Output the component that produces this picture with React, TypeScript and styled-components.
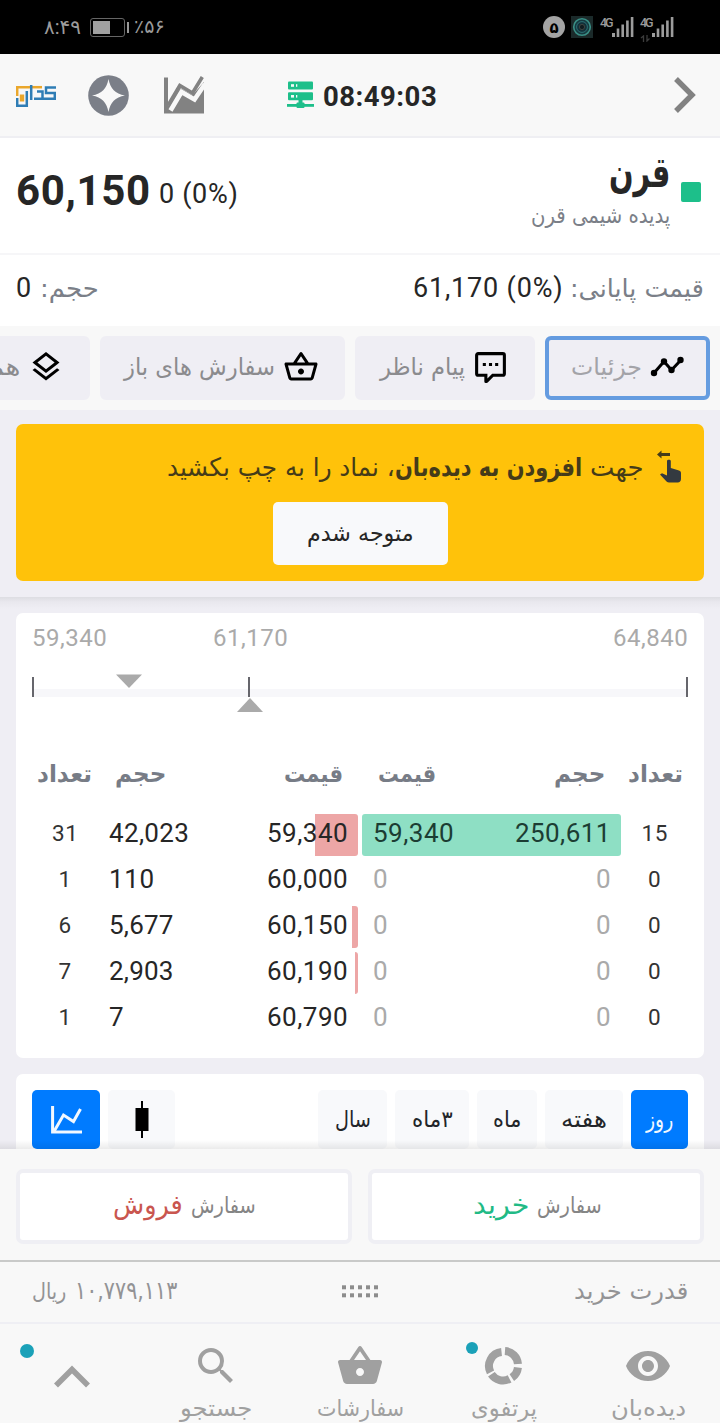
import React, { useLayoutEffect, useRef, useState } from "react";
import styled, { createGlobalStyle } from "styled-components";
import {
  MdOutlineShoppingBasket,
  MdOutlineLayers,
  MdSearch,
  MdShoppingBasket,
  MdVisibility,
} from "react-icons/md";

const GlobalStyle = createGlobalStyle`
  * { box-sizing: border-box; }
  html, body { margin: 0; padding: 0; }
  body {
    width: 720px;
    height: 1423px;
    overflow: hidden;
    background: #efeef4;
    font-family: Roboto, "DejaVu Sans", sans-serif;
    color: #262626;
  }
  svg { display: block; flex: none; }
`;

/* ---------- text that is fitted to a fixed width ---------- */

const FitBox = styled.span<{ $w: number; $color?: string }>`
  display: block;
  flex: none;
  width: ${(p) => p.$w}px;
  direction: ltr;
  white-space: nowrap;
  color: ${(p) => p.$color ?? "inherit"};
`;

const FitInner = styled.span<{ $size: number; $weight: number; $rtl: boolean; $family: string }>`
  display: inline-block;
  direction: ${(p) => (p.$rtl ? "rtl" : "ltr")};
  font-family: ${(p) => p.$family};
  font-size: ${(p) => p.$size}px;
  font-weight: ${(p) => p.$weight};
  line-height: 1.2;
  transform-origin: 0 50%;
`;

interface FitProps {
  w: number;
  size: number;
  weight?: number;
  color?: string;
  dy?: number;
  children: string;
}

/* Joined scripts are scaled; digits are spaced out instead. */
const Fit = ({
  w, size, weight = 400, color, dy = 0, children, rtl, family,
}: FitProps & { rtl: boolean; family: string }) => {
  const ref = useRef<HTMLSpanElement>(null);
  const [natural, setNatural] = useState(w);
  useLayoutEffect(() => {
    if (ref.current) setNatural(ref.current.offsetWidth);
  }, []);
  const scale = rtl ? w / natural : 1;
  const spacing = rtl ? 0 : (w - natural) / children.length;
  return (
    <FitBox $w={w} $color={color}>
      <FitInner
        ref={ref}
        $size={size}
        $weight={weight}
        $rtl={rtl}
        $family={family}
        style={{ transform: `translateY(${dy}px) scaleX(${scale})`, letterSpacing: `${spacing}px` }}
      >
        {children}
      </FitInner>
    </FitBox>
  );
};

const Fa = (p: FitProps) => <Fit {...p} rtl family={`"DejaVu Sans", sans-serif`} />;
const Num = (p: FitProps) => <Fit {...p} rtl={false} family={`Roboto, "DejaVu Sans", sans-serif`} />;

/* ---------- layout ---------- */

const Screen = styled.div`
  width: 720px;
  height: 1423px;
  overflow: hidden;
  display: flex;
  flex-direction: column;
`;

const StatusBar = styled.div`
  height: 54px;
  flex: none;
  background: #000;
  color: #9b9b9b;
  display: flex;
  align-items: center;
  padding: 0 47px 0 44px;
`;

const Battery = styled.div`
  width: 35px;
  height: 19px;
  margin-left: 12px;
  border: 1.5px solid #666;
  border-radius: 3px;
  padding: 2px;
  &::before { content: ""; display: block; width: 17px; height: 100%; background: #a0a0a0; }
`;
const BatteryTip = styled.div`
  width: 2px; height: 11px; margin: 0 5px 0 2px; background: #999;
`;
const Grow = styled.div`flex: 1;`;

const CountBadge = styled.div`
  width: 22px; height: 22px; border-radius: 50%;
  background: #a3a3a3; color: #000;
  display: flex; align-items: center; justify-content: center;
  margin-right: 6px;
`;

const Signal = styled.div`
  display: flex; align-items: flex-start; width: 33px; height: 22px; margin-left: 7px;
`;
const SignalLabel = styled.div`
  width: 12px; flex: none;
`;

const Header = styled.header`
  height: 84px;
  flex: none;
  background: #f8f8f8;
  border-bottom: 2px solid #efeff3;
  display: flex;
  align-items: center;
  padding: 0 23px 0 16px;
`;

const HeadIcon = styled.div<{ $ml: number }>`margin-left: ${(p) => p.$ml}px;`;

const SymbolRow = styled.section`
  height: 117px;
  flex: none;
  background: #fff;
  border-bottom: 2px solid #f6f6f8;
  display: flex;
  align-items: center;
  padding: 0 19px 8px 16px;
`;
const SymbolName = styled.div`
  display: flex; flex-direction: column; align-items: flex-end;
  margin-right: 11px;
`;
const StatusSquare = styled.div`
  width: 20px; height: 20px; border-radius: 2px; background: #1dbf8a;
`;

const FinalRow = styled.section`
  height: 71px;
  flex: none;
  background: #fff;
  display: flex;
  align-items: center;
  padding: 0 16px 5px;
`;
const Gap = styled.div<{ $w: number }>`width: ${(p) => p.$w}px; flex: none;`;

const Tabs = styled.nav`
  height: 84px;
  flex: none;
  background: #f8f8f8;
  display: flex;
  direction: rtl;
  align-items: center;
  gap: 10px;
  padding: 0 10px;
`;
const Tab = styled.button<{ $w: number; $pad: number; $active?: boolean }>`
  all: unset;
  box-sizing: border-box;
  direction: rtl;
  flex: none;
  width: ${(p) => p.$w}px;
  height: 64px;
  border-radius: 6px;
  border: 4px solid ${(p) => (p.$active ? "#659ce0" : "#efeef4")};
  background: #efeef4;
  display: flex;
  align-items: center;
  padding: 0 ${(p) => p.$pad}px 4px 0;
  color: ${(p) => (p.$active ? "#a3a3a8" : "#8b8b8e")};
  svg { color: #000; margin-top: 2px; }
`;

const AlertArea = styled.section`
  height: 187px;
  flex: none;
  padding: 14px 16px 16px;
`;
const Alert = styled.div`
  height: 157px;
  border-radius: 7px;
  background: #ffc20a;
  display: flex;
  flex-direction: column;
  align-items: center;
`;
const AlertLine = styled.div`
  align-self: stretch;
  direction: rtl;
  display: flex;
  align-items: center;
  height: 78px;
  padding: 6px 23px 0 0;
  color: #453b19;
`;
const AlertButton = styled.button`
  all: unset;
  width: 175px;
  height: 63px;
  margin-left: 1px;
  border-radius: 5px;
  background: #f8f9fb;
  display: flex;
  align-items: center;
  justify-content: center;
`;

const Content = styled.main`
  height: 552px;
  flex: none;
  padding: 16px 16px 0;
  background: linear-gradient(#dddde2, #e9e8ee 5px, #efeef4 12px);
  position: relative;
  overflow: hidden;
  display: flex;
  flex-direction: column;
  gap: 16px;
  &::after {
    content: "";
    position: absolute;
    left: 0; right: 0; bottom: 0;
    height: 9px;
    background: linear-gradient(rgba(0,0,0,0), rgba(0,0,0,0.08));
  }
`;

const Book = styled.div`
  height: 445px;
  flex: none;
  border-radius: 7px;
  background: #fff;
  padding: 10px 16px 0;
`;
const ScaleLabels = styled.div`
  display: flex; height: 30px; align-items: center; color: #aaa;
  margin-bottom: 20px;
`;

const BookHead = styled.div`
  display: flex;
  height: 50px;
  align-items: center;
  margin: 37px 0 13px;
  padding-left: 5px;
  color: #777c86;
`;
const BookRow = styled.div`
  display: grid;
  grid-template-columns: 66px 260px 4px 259px 67px;
  height: 46px;
  align-items: center;
`;
const Count = styled.div`
  display: flex; justify-content: center; color: #333;
`;
const Side = styled.div<{ $bar: number; $color: string; $from: string }>`
  height: 42px;
  display: flex;
  align-items: center;
  justify-content: space-between;
  padding: 0 10px 3px 11px;
  background: linear-gradient(${(p) => p.$color}, ${(p) => p.$color}) ${(p) => p.$from} / ${(p) => p.$bar}px 100% no-repeat;
  border-radius: 3px;
`;

const ChartCard = styled.div`
  height: 90px;
  flex: none;
  border-radius: 7px 7px 0 0;
  background: #fff;
  padding: 16px;
  display: flex;
  gap: 8px;
`;
const ChartButton = styled.button<{ $w: number; $on?: boolean }>`
  all: unset;
  width: ${(p) => p.$w}px;
  height: 59px;
  flex: none;
  border-radius: 5px;
  background: ${(p) => (p.$on ? "#007bff" : "#f8f9fb")};
  color: ${(p) => (p.$on ? "#f2f8ff" : "#222529")};
  display: flex;
  align-items: center;
  justify-content: center;
`;

const Orders = styled.section`
  height: 113px;
  flex: none;
  background: #f8f8f8;
  border-bottom: 2px solid #c9cac9;
  display: flex;
  gap: 16px;
  padding: 20px 16px 16px;
`;
const OrderButton = styled.button<{ $left: number }>`
  all: unset;
  box-sizing: border-box;
  flex: none;
  width: 336px;
  height: 75px;
  border: 4px solid #efeff4;
  border-radius: 7px;
  background: #fff;
  display: flex;
  align-items: center;
  gap: 8px;
  padding: 0 0 2px ${(p) => p.$left}px;
  color: #858585;
`;

const Power = styled.section`
  height: 62px;
  flex: none;
  background: #f8f8f8;
  border-bottom: 2px solid #efeff4;
  display: flex;
  align-items: center;
  padding: 0 32px 2px;
  color: #939395;
`;

const Nav = styled.nav`
  height: 99px;
  flex: none;
  background: #f8f8f8;
  display: grid;
  grid-template-columns: repeat(5, 144px);
  color: #a0a0a0;
`;
const NavItem = styled.a`
  position: relative;
  display: flex;
  flex-direction: column;
  align-items: center;
  padding-top: 17px;
  overflow: hidden;
`;
const NavIcon = styled.div<{ $drop?: number }>`
  height: 50px; display: flex; align-items: center; justify-content: center;
  margin-bottom: 4px;
  padding-top: ${(p) => p.$drop ?? 0}px;
`;
const Dot = styled.i<{ $x: number; $y: number; $d: number }>`
  position: absolute;
  left: ${(p) => p.$x}px;
  top: ${(p) => p.$y}px;
  width: ${(p) => p.$d}px;
  height: ${(p) => p.$d}px;
  border-radius: 50%;
  background: #1ba1b8;
`;

/* ---------- drawings ---------- */

const AppThumb = () => (
  <svg width="22" height="22" viewBox="0 0 22 22">
    <rect width="22" height="22" fill="#1b2a2a" />
    <circle cx="11" cy="11" r="8.3" fill="#173a40" stroke="#3a8f86" strokeWidth="1.6" />
    <circle cx="11" cy="11" r="5.4" fill="#12313a" stroke="#2c7276" strokeWidth="1" />
    <circle cx="11" cy="11" r="2.6" fill="#101c20" stroke="#4b4a44" strokeWidth=".8" />
  </svg>
);

const SignalBars = () => (
  <svg width="22" height="22" viewBox="0 0 22 22" fill="#9c9c9c">
    <rect x="0" y="17" width="3" height="4" />
    <rect x="4.7" y="12.5" width="2.6" height="8.5" />
    <rect x="9.4" y="8.5" width="2.6" height="12.5" />
    <rect x="14.1" y="4.5" width="2.6" height="16.5" />
    <rect x="18.8" y="1" width="2.6" height="20" />
  </svg>
);

const DataArrows = () => (
  <svg width="11" height="7" viewBox="0 0 11 7" stroke="#3c3c3c" strokeWidth="1.3" fill="none">
    <path d="M1 3L3.5 1V7M7 0V6L9.5 3.5" />
  </svg>
);

const Logo = () => (
  <svg width="40" height="23" viewBox="0 0 40 23" fill="none">
    <g stroke="#eaa72c" strokeWidth="2.5">
      <path d="M1.2 12V3.2H13" />
      <path d="M13 3.2H26" />
      <path d="M6 10.5V17.5" strokeWidth="4.4" />
    </g>
    <g stroke="#2f7db5" strokeWidth="2.5">
      <path d="M1.2 14V21.8H10.8V7" />
      <path d="M15.2 1V16" />
      <path d="M18 14.8H26.5V7.5H21" />
      <path d="M40 3.5H30V9H38.8V14.8H26" />
    </g>
  </svg>
);

const StarBadge = () => (
  <svg width="41" height="41" viewBox="0 0 41 41">
    <circle cx="20.5" cy="20.5" r="20.3" fill="#7b7f88" />
    <path d="M20.5 4C22.5 14 27 18.5 37 20.5C27 22.5 22.5 27 20.5 37C18.5 27 14 22.5 4 20.5C14 18.5 18.5 14 20.5 4Z" fill="#f8f8f8" />
  </svg>
);

const TrendArea = () => (
  <svg width="40" height="38" viewBox="0 0 40 38">
    <path d="M0 1.5H4V30L16 12L28.5 19L40 6V37.5H0Z" fill="#828282" />
    <path d="M6.5 34.5L17.5 16L30.5 23.5L41 8" fill="none" stroke="#f8f8f8" strokeWidth="4.6" />
    <path d="M4 29.5L15.8 9.5L28.5 17L38.3 1" fill="none" stroke="#828282" strokeWidth="3.6" />
  </svg>
);

const Server = () => (
  <svg width="27" height="28" viewBox="0 0 27 28">
    <g fill="#1dbf8a">
      <rect x="1" y="0.5" width="25" height="8" rx="1" />
      <rect x="1" y="11.3" width="25" height="8" rx="1" />
      <rect x="11.5" y="19" width="4" height="4" />
      <rect x="0" y="23" width="27" height="2.8" />
      <rect x="9.5" y="21.5" width="8" height="5.5" rx="1" />
    </g>
    <g fill="#f8f8f8">
      <rect x="4" y="3.2" width="3" height="2.6" /><rect x="9" y="3.2" width="1.3" height="2.6" />
      <rect x="4" y="14" width="3" height="2.6" /><rect x="9" y="14" width="1.3" height="2.6" />
    </g>
  </svg>
);

const ChevronRight = () => (
  <svg width="24" height="38" viewBox="0 0 24 38">
    <path d="M3 3L19 19L3 35" fill="none" stroke="#828282" strokeWidth="5.4" />
  </svg>
);

const Timeline = () => (
  <svg width="34" height="22" viewBox="0 0 34 22">
    <path d="M4 17L14 5.5L21.5 14L30.5 4.5" fill="none" stroke="currentColor" strokeWidth="3" />
    <circle cx="4" cy="17" r="3.2" /><circle cx="14" cy="5.5" r="3.2" />
    <circle cx="21.5" cy="14" r="3.2" /><circle cx="30.5" cy="4" r="3.2" />
  </svg>
);

const Message = () => (
  <svg width="37" height="37" viewBox="0 0 24 24" fill="currentColor">
    <path d="M9,22A1,1 0 0,1 8,21V18H4A2,2 0 0,1 2,16V4C2,2.89 2.9,2 4,2H20A2,2 0 0,1 22,4V16A2,2 0 0,1 20,18H13.9L10.2,21.71C10,21.9 9.75,22 9.5,22H9M10,16V19.08L13.08,16H20V4H4V16H10M17,11H15V9H17V11M13,11H11V9H13V11M9,11H7V9H9V11Z" />
  </svg>
);

const SwipeHand = () => (
  <svg width="24" height="33" viewBox="0 0 24 33">
    <path d="M0 4.5L4.5 0.5V3H13V6H4.5V8.5Z" fill="#453b19" />
    <path d="M10 11C10 9.2 13.8 9.2 13.8 11V18L22 20.5C23.5 21 24 22 24 23.2V29C24 31 22.6 32.5 20.8 32.5H12C10.5 32.5 9.6 31.8 8.6 30.6L3 24.5L5 23.2L10 25.4Z" fill="#343a40" />
  </svg>
);

const PriceScale = () => (
  <svg width="656" height="39" viewBox="0 0 656 39">
    <rect x="2" y="16" width="654" height="8" fill="#f7f7fa" />
    <g fill="#66666c">
      <rect x="0" y="4" width="2" height="20" />
      <rect x="216" y="4" width="2" height="20" />
      <rect x="654" y="4" width="2" height="20" />
    </g>
    <path d="M84 1.5H110L97 15Z" fill="#aaa" />
    <path d="M205 39H231L218 25Z" fill="#aaa" />
  </svg>
);

const LineChart = () => (
  <svg width="31" height="28" viewBox="0 0 31 28" fill="none" stroke="#f2f8ff" strokeWidth="3">
    <path d="M1.6 0V26H31" />
    <path d="M3 25.5L12.5 9L22.5 15.5L29.5 3" />
  </svg>
);

const Candle = () => (
  <svg width="14" height="38" viewBox="0 0 14 38">
    <rect x="6" y="0" width="2" height="37" />
    <rect x="0.5" y="7" width="13" height="23" />
  </svg>
);

const Grip = () => (
  <svg width="37" height="13" viewBox="0 0 37 13" fill="#8d8d8d">
    {[0, 8, 16, 24, 32].map((x) => (
      <React.Fragment key={x}>
        <rect x={x} y="0.3" width="4" height="4" />
        <rect x={x} y="8.3" width="4" height="4" />
      </React.Fragment>
    ))}
  </svg>
);

const arc = (a: number, b: number, cx = 20, cy = 20) => {
  const r = 14;
  const pt = (d: number) => {
    const t = (d * Math.PI) / 180;
    return `${(cx + r * Math.sin(t)).toFixed(2)} ${(cy - r * Math.cos(t)).toFixed(2)}`;
  };
  return `M${pt(a)}A${r} ${r} 0 ${b - a > 180 ? 1 : 0} 1 ${pt(b)}`;
};
const Donut = () => (
  <svg width="40" height="40" viewBox="0 0 40 40" fill="none" stroke="#a0a0a0" strokeWidth="8">
    <path d={arc(4, 86, 20, 19)} />
    <path d={arc(96, 146, 20, 20)} />
    <path d={arc(152, 236, 19, 20.5)} />
    <path d={arc(243, 354, 19, 20)} />
  </svg>
);

const ChevronUp = () => (
  <svg width="38" height="24" viewBox="0 0 38 24">
    <path d="M3 20.5L19 4.5L35 20.5" fill="none" stroke="#a0a0a0" strokeWidth="5.6" />
  </svg>
);

/* ---------- data ---------- */

interface Level {
  sellCount: string; sellVol: string; sellVolW: number; sellPrice: string; sellBar: number;
  buyPrice: string; buyVol: string; buyCount: string; buyBar: number;
}
const levels: Level[] = [
  { sellCount: "31", sellVol: "42,023", sellVolW: 80, sellPrice: "59,340", sellBar: 43, buyPrice: "59,340", buyVol: "250,611", buyCount: "15", buyBar: 259 },
  { sellCount: "1", sellVol: "110", sellVolW: 46, sellPrice: "60,000", sellBar: 0, buyPrice: "0", buyVol: "0", buyCount: "0", buyBar: 0 },
  { sellCount: "6", sellVol: "5,677", sellVolW: 65, sellPrice: "60,150", sellBar: 6, buyPrice: "0", buyVol: "0", buyCount: "0", buyBar: 0 },
  { sellCount: "7", sellVol: "2,903", sellVolW: 65, sellPrice: "60,190", sellBar: 3, buyPrice: "0", buyVol: "0", buyCount: "0", buyBar: 0 },
  { sellCount: "1", sellVol: "7", sellVolW: 15, sellPrice: "60,790", sellBar: 0, buyPrice: "0", buyVol: "0", buyCount: "0", buyBar: 0 },
];

export default function App() {
  return (
    <Screen>
      <GlobalStyle />
      <StatusBar>
        <Num w={34} size={20}>۸:۴۹</Num>
        <Battery />
        <BatteryTip />
        <Num w={28} size={19}>٪۵۶</Num>
        <Grow />
        <CountBadge><Fa w={9} size={15} weight={700}>۵</Fa></CountBadge>
        <AppThumb />
        {[0, 1].map((i) => (
          <Signal key={i}>
            <SignalLabel>
              <Num w={12} size={12.5} weight={500} dy={-4}>4G</Num>
              {i === 1 && <DataArrows />}
            </SignalLabel>
            <SignalBars />
          </Signal>
        ))}
      </StatusBar>

      <Header>
        <HeadIcon $ml={0}><Logo /></HeadIcon>
        <HeadIcon $ml={32}><StarBadge /></HeadIcon>
        <HeadIcon $ml={35}><TrendArea /></HeadIcon>
        <HeadIcon $ml={83}><Server /></HeadIcon>
        <Gap $w={9} />
        <Num w={114} size={27.5} weight={700} dy={1}>08:49:03</Num>
        <Grow />
        <ChevronRight />
      </Header>

      <SymbolRow>
        <Num w={135} size={42} weight={700}>60,150</Num>
        <Gap $w={8} />
        <Num w={79} size={27} dy={3}>0 (0%)</Num>
        <Grow />
        <SymbolName>
          <Fa w={61} size={42} weight={700} dy={-5}>قرن</Fa>
          <Fa w={139} size={22.5} color="#7b7f88" dy={-1}>پدیده شیمی قرن</Fa>
        </SymbolName>
        <StatusSquare />
      </SymbolRow>

      <FinalRow>
        <Num w={16} size={27}>0</Num>
        <Gap $w={8} />
        <Fa w={59} size={25} color="#7b7f88" dy={1}>حجم:</Fa>
        <Grow />
        <Num w={150} size={27}>61,170 (0%)</Num>
        <Gap $w={7} />
        <Fa w={134} size={25} color="#7b7f88" dy={1}>قیمت پایانی:</Fa>
      </FinalRow>

      <Tabs>
        <Tab $w={165} $pad={22} $active>
          <Timeline /><Gap $w={8} />
          <Fa w={71} size={24} dy={1}>جزئیات</Fa>
        </Tab>
        <Tab $w={180} $pad={22}>
          <Message /><Gap $w={7} />
          <Fa w={85} size={24} dy={1}>پیام ناظر</Fa>
        </Tab>
        <Tab $w={245} $pad={22}>
          <MdOutlineShoppingBasket size={36} /><Gap $w={8} />
          <Fa w={151} size={24} dy={1}>سفارش های باز</Fa>
        </Tab>
        <Tab $w={160} $pad={22}>
          <MdOutlineLayers size={36} /><Gap $w={8} />
          <Fa w={46} size={24} dy={1}>همه</Fa>
        </Tab>
      </Tabs>

      <AlertArea>
        <Alert>
          <AlertLine>
            <SwipeHand /><Gap $w={13} />
            <Fa w={54} size={25.5} dy={1}>جهت</Fa><Gap $w={8} />
            <Fa w={187} size={25.5} weight={700} dy={1}>افزودن به دیده‌بان</Fa>
            <Fa w={228} size={25.5} dy={1}>، نماد را به چپ بکشید</Fa>
          </AlertLine>
          <AlertButton><Fa w={107} size={23}>متوجه شدم</Fa></AlertButton>
        </Alert>
      </AlertArea>

      <Content>
        <Book>
          <ScaleLabels>
            <Num w={75} size={24}>59,340</Num>
            <Gap $w={106} />
            <Num w={75} size={24}>61,170</Num>
            <Grow />
            <Num w={75} size={24}>64,840</Num>
          </ScaleLabels>
          <PriceScale />
          <BookHead>
            <Fa w={55} size={24} weight={700}>تعداد</Fa><Gap $w={23} />
            <Fa w={51} size={24} weight={700}>حجم</Fa><Gap $w={118} />
            <Fa w={59} size={24} weight={700}>قیمت</Fa><Gap $w={35} />
            <Fa w={58} size={24} weight={700}>قیمت</Fa><Gap $w={118} />
            <Fa w={51} size={24} weight={700}>حجم</Fa><Gap $w={23} />
            <Fa w={55} size={24} weight={700}>تعداد</Fa>
          </BookHead>
          {levels.map((l, i) => (
            <BookRow key={i}>
              <Count><Num w={l.sellCount.length * 13} size={22.5} dy={-2}>{l.sellCount}</Num></Count>
              <Side $bar={l.sellBar} $color="#eda6a6" $from="right">
                <Num w={l.sellVolW} size={26}>{l.sellVol}</Num>
                <Num w={81} size={26}>{l.sellPrice}</Num>
              </Side>
              <span />
              <Side $bar={l.buyBar} $color="#8edfc4" $from="left">
                <Num w={l.buyBar ? 81 : 15} size={26} color={l.buyBar ? "#1c3d33" : "#aaa"}>{l.buyPrice}</Num>
                <Num w={l.buyBar ? 96 : 15} size={26} color={l.buyBar ? "#1c3d33" : "#aaa"}>{l.buyVol}</Num>
              </Side>
              <Count><Num w={l.buyCount.length * 13} size={22.5} dy={-2}>{l.buyCount}</Num></Count>
            </BookRow>
          ))}
        </Book>
        <ChartCard>
          <ChartButton $w={68} $on><LineChart /></ChartButton>
          <ChartButton $w={67}><Candle /></ChartButton>
          <Grow />
          <ChartButton $w={69}><Fa w={36} size={23}>سال</Fa></ChartButton>
          <ChartButton $w={74}><Fa w={41} size={23}>۳ماه</Fa></ChartButton>
          <ChartButton $w={60}><Fa w={28} size={23}>ماه</Fa></ChartButton>
          <ChartButton $w={78}><Fa w={46} size={23}>هفته</Fa></ChartButton>
          <ChartButton $w={57} $on><Fa w={27} size={23}>روز</Fa></ChartButton>
        </ChartCard>
      </Content>

      <Orders>
        <OrderButton $left={93}>
          <Fa w={70} size={27} color="#c9564f">فروش</Fa>
          <Fa w={65} size={22} dy={1}>سفارش</Fa>
        </OrderButton>
        <OrderButton $left={101}>
          <Fa w={56} size={27} color="#21ba85">خرید</Fa>
          <Fa w={65} size={22} dy={1}>سفارش</Fa>
        </OrderButton>
      </Orders>

      <Power>
        <Fa w={34} size={22} dy={1}>ریال</Fa>
        <Gap $w={9} />
        <Fa w={102} size={25}>۱۰,۷۷۹,۱۱۳</Fa>
        <Gap $w={165} />
        <Grip />
        <Grow />
        <Fa w={114} size={24}>قدرت خرید</Fa>
      </Power>

      <Nav>
        <NavItem>
          <Dot $x={20} $y={20} $d={14} />
          <NavIcon $drop={22}><ChevronUp /></NavIcon>
        </NavItem>
        <NavItem>
          <NavIcon><MdSearch size={48} /></NavIcon>
          <Fa w={72} size={23}>جستجو</Fa>
        </NavItem>
        <NavItem>
          <NavIcon><MdShoppingBasket size={48} /></NavIcon>
          <Fa w={87} size={23}>سفارشات</Fa>
        </NavItem>
        <NavItem>
          <Dot $x={34} $y={18} $d={12} />
          <NavIcon><Donut /></NavIcon>
          <Fa w={66} size={23}>پرتفوی</Fa>
        </NavItem>
        <NavItem>
          <NavIcon><MdVisibility size={48} /></NavIcon>
          <Fa w={75} size={23}>دیده‌بان</Fa>
        </NavItem>
      </Nav>
    </Screen>
  );
}
